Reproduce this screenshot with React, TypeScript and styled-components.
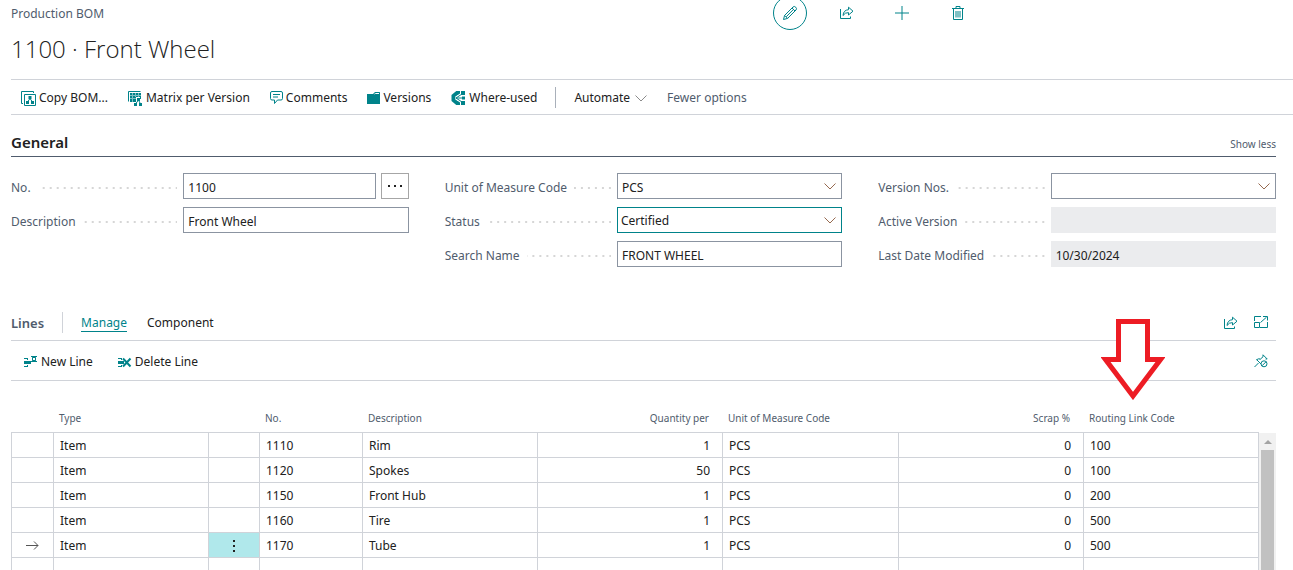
import React from "react";
import styled, { createGlobalStyle, css } from "styled-components";

const teal = "#00838a";
const ink = "#212121";
const slate = "#505c6d";
const rule = "#d0d3d9";
const fieldBorder = "#8b94a1";

const GlobalStyle = createGlobalStyle`
  *, *::before, *::after { box-sizing: border-box; }
  body {
    margin: 0;
    background: #fff;
    color: ${ink};
    font-family: "Segoe UI", "Noto Sans", "Open Sans", sans-serif;
    font-size: 12px;
    line-height: 16px;
  }
  button, input, select { font: inherit; color: inherit; }
  button { padding: 0; border: 0; background: none; cursor: pointer; }
`;

const Page = styled.div`
  display: flex;
  flex-direction: column;
  height: 100vh;
  padding-left: 11px;
  overflow: hidden;
`;

const Header = styled.header`
  display: grid;
  grid-template-columns: 12fr auto 5fr;
  height: 30px;
`;

const Caption = styled.span`
  padding-top: 6px;
  color: ${slate};
`;

const HeaderActions = styled.div`
  display: flex;
  gap: 22px;
  margin-top: -4px;
`;

const RoundButton = styled.button<{ $ring?: boolean }>`
  display: grid;
  place-items: center;
  width: 34px;
  height: 34px;
  border-radius: 50%;
  color: ${teal};
  ${(p) => p.$ring && css`border: 1px solid ${teal};`}
`;

const Title = styled.h1`
  margin: 0 0 11px;
  font-family: "Segoe UI", "Open Sans", sans-serif;
  font-size: 24px;
  font-weight: 300;
  line-height: 38px;
`;

const Toolbar = styled.div`
  display: flex;
  align-items: center;
  height: 36px;
  padding-left: 10px;
  border-top: 1px solid ${rule};
  border-bottom: 1px solid ${rule};
  flex: none;
`;

const Actions = styled.div<{ $gap: number }>`
  display: flex;
  gap: ${(p) => p.$gap}px;
`;

const Action = styled.button<{ $muted?: boolean }>`
  display: flex;
  align-items: center;
  gap: 3px;
  padding-top: 2px;
  white-space: nowrap;
  color: ${(p) => (p.$muted ? slate : ink)};
  svg { flex: none; color: ${teal}; }
`;

const MenuArrow = styled.svg`
  && { margin-left: 2px; color: #8b8b8b; }
`;

const Separator = styled.span<{ $space: number; $light?: boolean }>`
  width: 1px;
  height: 21px;
  margin: 0 ${(p) => p.$space}px;
  background: ${(p) => (p.$light ? rule : "#a9b0ba")};
`;

const Body = styled.main`
  display: flex;
  flex-direction: column;
  flex: 1;
  min-height: 0;
  padding-right: 17px;
`;

const SectionHead = styled.div`
  display: flex;
  align-items: flex-end;
  justify-content: space-between;
  height: 42px;
  padding-bottom: 3px;
  border-bottom: 1px solid ${slate};
  flex: none;
`;

const SectionTitle = styled.h2`
  margin: 0;
  font-size: 15px;
  font-weight: 600;
  line-height: 22px;
`;

const ShowLess = styled.button`
  font-size: 10px;
  line-height: 18px;
  color: ${slate};
`;

const Fields = styled.div`
  display: grid;
  grid-template-columns: repeat(3, 1fr);
  gap: 36px;
  align-items: start;
  margin-top: 16px;
  flex: none;
`;

const FieldColumn = styled.div`
  display: grid;
  gap: 8px;
`;

const FieldRow = styled.div`
  display: grid;
  grid-template-columns: 13fr 17fr;
  align-items: center;
  height: 26px;
`;

const FieldLabel = styled.label`
  display: flex;
  align-items: center;
  gap: 7px;
  padding: 4px 6px 0 0;
  color: ${slate};
  white-space: nowrap;
  &::after {
    content: "";
    flex: 1;
    height: 2px;
    background: linear-gradient(90deg, transparent 5px, #d6d6d6 5px) right / 7px 2px repeat-x;
  }
`;

const Control = styled.div`
  position: relative;
  display: flex;
  gap: 5px;
`;

const box = css`
  width: 100%;
  min-width: 0;
  height: 26px;
  padding: 3px 4px 0;
  border: 1px solid ${fieldBorder};
  border-radius: 0;
  background: #fff;
  outline: 0;
`;

const TextInput = styled.input`
  ${box}
  &:read-only { border-color: #ebecee; background: #ebecee; }
`;

const Select = styled.select<{ $active?: boolean }>`
  ${box}
  appearance: none;
  ${(p) => p.$active && css`
    padding: 1px 3px 0;
    border-color: ${teal};
  `}
`;

const SelectArrow = styled.svg`
  position: absolute;
  top: 10px;
  right: 6px;
  pointer-events: none;
`;

const AssistButton = styled.button`
  display: grid;
  place-items: center;
  flex: none;
  width: 28px;
  height: 26px;
  border: 1px solid #a6a6a6;
`;

const LinesHead = styled.div`
  display: flex;
  align-items: center;
  height: 36px;
  margin-top: 38px;
  border-bottom: 1px solid ${rule};
  flex: none;
`;

const LinesTitle = styled.h2`
  margin: 0;
  font-size: 13px;
  font-weight: 600;
  line-height: 16px;
  color: ${slate};
`;

const Tab = styled.button<{ $active?: boolean }>`
  padding-top: 2px;
  line-height: 16px;
  border-bottom: 1px solid ${(p) => (p.$active ? teal : "transparent")};
  color: ${(p) => (p.$active ? teal : ink)};
`;

const IconGroup = styled.div`
  display: flex;
  gap: 16px;
  margin-left: auto;
  padding-right: 8px;
`;

const IconButton = styled.button`
  display: grid;
  color: ${teal};
`;

const LinesToolbar = styled.div`
  display: flex;
  align-items: center;
  height: 40px;
  padding-left: 12px;
  border-bottom: 1px solid ${rule};
  flex: none;
`;

const GridArea = styled.div`
  display: flex;
  flex: 1;
  min-height: 0;
  margin-top: 24px;
`;

const Table = styled.table`
  flex: 1;
  align-self: flex-start;
  width: 100%;
  table-layout: fixed;
  border-collapse: separate;
  border-spacing: 0;
`;

const HeadCell = styled.th<{ $right?: boolean }>`
  position: relative;
  height: 28px;
  padding: 0 14px 2px 5px;
  border-bottom: 1px solid ${rule};
  font-size: 10px;
  font-weight: 400;
  text-align: ${(p) => (p.$right ? "right" : "left")};
  white-space: nowrap;
  color: ${slate};
`;

const Cell = styled.td<{ $right?: boolean; $mark?: boolean }>`
  height: 25px;
  padding: 2px ${(p) => (p.$mark ? 0 : 12)}px 0 ${(p) => (p.$mark ? 0 : 6)}px;
  border-right: 1px solid ${rule};
  border-bottom: 1px solid ${rule};
  text-align: ${(p) => (p.$mark ? "center" : p.$right ? "right" : "left")};
  &:first-child { border-left: 1px solid ${rule}; }
`;

const MenuCell = styled(Cell)<{ $on: boolean }>`
  background: ${(p) => (p.$on ? "#b0e8eb" : "transparent")};
  svg { display: block; margin: auto; }
`;

const RowMenu = styled.button`
  display: block;
  width: 100%;
`;

const Scrollbar = styled.div`
  display: flex;
  flex-direction: column;
  align-items: center;
  width: 17px;
  margin-top: 28px;
  background: #f1f1f1;
`;

const ScrollUp = styled.button`
  display: grid;
  place-items: center;
  width: 17px;
  height: 17px;
`;

const Thumb = styled.div`
  flex: 1;
  width: 13px;
  background: #c1c1c1;
`;

const PointerArrow = styled.svg`
  position: absolute;
  left: 17px;
  bottom: 32px;
  z-index: 1;
  pointer-events: none;
`;

const Chevron = () => (
  <path d="M0.5 0.5 L6 6 L11.5 0.5" fill="none" stroke="currentColor" />
);

const PencilIcon = () => (
  <svg width="16" height="16" viewBox="0 0 16 16" fill="none" stroke="currentColor">
    <path d="M1.5 14.5 L2.6 10.4 L11 2 Q12.4 .8 13.7 2.2 Q15.2 3.6 14 5 L5.6 13.4 Z M2.6 10.4 L5.6 13.4 M10 3 L13 6 M4.2 11.8 L11.4 4.5" />
  </svg>
);

const ShareIcon = () => (
  <svg width="15" height="14" viewBox="0 0 15 14" fill="none" stroke="currentColor">
    <path d="M1.5 3 V12.5 H11.5 V10.5" />
    <path d="M4 9.5 Q4.5 4 9.5 3.7 V1.2 L14 5.2 L9.5 9 V6.6 Q6 6.4 4 9.5 Z" />
  </svg>
);

const PlusIcon = () => (
  <svg width="14" height="14" viewBox="0 0 14 14" stroke="currentColor">
    <path d="M0 7 H14 M7 0 V14" />
  </svg>
);

const TrashIcon = () => (
  <svg width="12" height="15" viewBox="0 0 12 15" fill="none" stroke="currentColor">
    <path d="M0 2.5 H12 M4 2.5 V.5 H8 V2.5 M1.5 2.5 V13.5 H10.5 V2.5 M4 5 V11.5 M6 5 V11.5 M8 5 V11.5" />
  </svg>
);

const CopyIcon = () => (
  <svg width="15" height="15" viewBox="0 0 15 15" fill="none" stroke="currentColor">
    <path d="M2 12.5 H.5 V.5 H12.5 V2" />
    <path d="M3.5 3.5 H14.5 V14.5 H3.5 Z" />
    <path d="M7.5 5 H10.5 V8 H7.5 Z M5 10 H8 V13 H5 Z M10 10 H13 V13 H10 Z" fill="currentColor" stroke="none" />
    <path d="M9 7.5 L6.5 11 M9 7.5 L11.5 11" />
  </svg>
);

const MatrixIcon = () => (
  <svg width="15" height="15" viewBox="0 0 15 15" fill="none" stroke="currentColor">
    <path d="M.5 10.5 V.5 H12.5" />
    <path d="M2 2 H13 V8 H12 V6 H8 V11 H2 Z" fill="currentColor" stroke="none" />
    <path d="M2 4.5 H13 M2 7.5 H8 M4.5 2 V11 M7.5 2 V6 M10.5 2 V6" stroke="#7fbfc3" />
    <path d="M9 7 H12 V10 H9 Z M6 12 H9 V15 H6 Z M11 12 H14 V15 H11 Z" fill="currentColor" stroke="none" />
    <path d="M10.5 9 L7.5 13 M10.5 9 L12.5 13" />
  </svg>
);

const CommentIcon = () => (
  <svg width="13" height="14" viewBox="0 0 13 14" fill="none" stroke="currentColor">
    <path d="M2 .5 H11 Q12.5 .5 12.5 2 V7.5 Q12.5 9 11 9 H7.5 L4.5 12.5 V9 H2 Q.5 9 .5 7.5 V2 Q.5 .5 2 .5 Z M3 3.5 H10 M3 6 H8" />
  </svg>
);

const FolderIcon = () => (
  <svg width="13" height="12" viewBox="0 0 13 12">
    <path d="M0 2 H6 L8 0 H12.5 L13 .5 V12 H0 Z" fill="currentColor" />
    <path d="M7.5 2 L8.5 1.5 H12" stroke="#fff" fill="none" />
  </svg>
);

const WhereUsedIcon = () => (
  <svg width="15" height="14" viewBox="0 0 15 14" fill="none" stroke="currentColor">
    <path d="M9 2 H6 L2.5 5 V9 L6 12 H9" strokeWidth="4" />
    <path d="M5 7 L11 3 M5 7 L11 11 M5 7 H12" stroke="#fff" strokeWidth="3" />
    <path d="M5 7 L11 3 M5 7 L11 11 M5 7 H12" />
    <path d="M10 0 H14 V4 H10 Z M10 10 H14 V14 H10 Z M11 5.5 H14 V8.5 H11 Z" fill="currentColor" stroke="none" />
  </svg>
);

const NewLineIcon = () => (
  <svg width="15" height="14" viewBox="0 0 15 14" fill="none" stroke="currentColor">
    <path d="M1 3.5 H4.5 M1 11.5 H4.5 M4.5 3 V5 M4.5 10 V12" />
    <path d="M1 6 H8 V9 H1 Z" fill="currentColor" stroke="none" />
    <path d="M9.5 2.5 H12.5 V5.5 H9.5 Z M8 1 L9.5 2.5 M14 1 L12.5 2.5 M8 7 L9.5 5.5 M14 7 L12.5 5.5 M9 1.5 H13 M9 6.5 H13" />
  </svg>
);

const DeleteLineIcon = () => (
  <svg width="15" height="14" viewBox="0 0 15 14" fill="none" stroke="currentColor">
    <path d="M1 3.5 H4.5 M1 11.5 H4.5 M4.5 3 V5 M4.5 10 V12" />
    <path d="M1 6 H7 V9 H1 Z" fill="currentColor" stroke="none" />
    <path d="M6 3.5 L13.5 11.5 M13.5 3.5 L6 11.5" strokeWidth="2" />
  </svg>
);

const ExpandIcon = () => (
  <svg width="14" height="12" viewBox="0 0 14 12" fill="none" stroke="currentColor">
    <path d="M.5 5 V.5 H7 M13.5 6 V11.5 H6 M.5 6.5 H5.5 V11.5 H.5 Z M6.5 6.5 L12.5 1.2 M9 .5 H13.5 V4.5" />
  </svg>
);

const UnpinIcon = () => (
  <svg width="14" height="14" viewBox="0 0 14 14" fill="none" stroke="currentColor">
    <path d="M.5 13 L4.5 9 M2.5 5.5 L7 10 M2.5 5.8 Q4.5 4.2 6.5 5 L9 2.8 V.8 L13.2 5 H11.5 M6.5 5 L6 5.5" />
    <circle cx="10" cy="9.8" r="3" />
    <path d="M8 11.8 L12 7.8" />
  </svg>
);

type FieldProps = {
  id: string;
  label: string;
  value: string;
  kind?: "text" | "select" | "assist" | "readonly";
  active?: boolean;
};

const Field = ({ id, label, value, kind = "text", active }: FieldProps) => (
  <FieldRow>
    <FieldLabel htmlFor={id}>{label}</FieldLabel>
    <Control>
      {kind === "select" ? (
        <>
          <Select id={id} defaultValue={value} $active={active}>
            <option>{value}</option>
          </Select>
          <SelectArrow width="12" height="7" viewBox="0 0 12 7" color="#96694f">
            <Chevron />
          </SelectArrow>
        </>
      ) : (
        <TextInput id={id} defaultValue={value} readOnly={kind === "readonly"} />
      )}
      {kind === "assist" && (
        <AssistButton aria-label="Assist edit">
          <svg width="14" height="2" viewBox="0 0 14 2" fill={ink}>
            <path d="M0 0 H2 V2 H0 Z M6 0 H8 V2 H6 Z M12 0 H14 V2 H12 Z" />
          </svg>
        </AssistButton>
      )}
    </Control>
  </FieldRow>
);

const columnWidths = [43, 155, 51, 103, 175, 185, 176, 185, 175];

const lines = [
  { no: "1110", description: "Rim", quantity: 1, routing: "100" },
  { no: "1120", description: "Spokes", quantity: 50, routing: "100" },
  { no: "1150", description: "Front Hub", quantity: 1, routing: "200" },
  { no: "1160", description: "Tire", quantity: 1, routing: "500" },
  { no: "1170", description: "Tube", quantity: 1, routing: "500", current: true },
];

export default function App() {
  return (
    <Page>
      <GlobalStyle />
      <Header>
        <Caption>Production BOM</Caption>
        <HeaderActions>
          <RoundButton $ring aria-label="Edit"><PencilIcon /></RoundButton>
          <RoundButton aria-label="Share"><ShareIcon /></RoundButton>
          <RoundButton aria-label="New"><PlusIcon /></RoundButton>
          <RoundButton aria-label="Delete"><TrashIcon /></RoundButton>
        </HeaderActions>
      </Header>
      <Title>1100 · Front Wheel</Title>

      <Toolbar>
        <Actions $gap={20}>
          <Action><CopyIcon />Copy BOM...</Action>
          <Action><MatrixIcon />Matrix per Version</Action>
          <Action><CommentIcon />Comments</Action>
          <Action><FolderIcon />Versions</Action>
          <Action><WhereUsedIcon />Where-used</Action>
        </Actions>
        <Separator $space={18} />
        <Actions $gap={20}>
          <Action>
            Automate
            <MenuArrow width="12" height="7" viewBox="0 0 12 7">
              <Chevron />
            </MenuArrow>
          </Action>
          <Action $muted>Fewer options</Action>
        </Actions>
      </Toolbar>

      <Body>
        <SectionHead>
          <SectionTitle>General</SectionTitle>
          <ShowLess>Show less</ShowLess>
        </SectionHead>
        <Fields>
          <FieldColumn>
            <Field id="no" label="No." value="1100" kind="assist" />
            <Field id="description" label="Description" value="Front Wheel" />
          </FieldColumn>
          <FieldColumn>
            <Field id="uom" label="Unit of Measure Code" value="PCS" kind="select" />
            <Field id="status" label="Status" value="Certified" kind="select" active />
            <Field id="search" label="Search Name" value="FRONT WHEEL" />
          </FieldColumn>
          <FieldColumn>
            <Field id="version-nos" label="Version Nos." value="" kind="select" />
            <Field id="active-version" label="Active Version" value="" kind="readonly" />
            <Field id="modified" label="Last Date Modified" value="10/30/2024" kind="readonly" />
          </FieldColumn>
        </Fields>

        <LinesHead>
          <LinesTitle>Lines</LinesTitle>
          <Separator $space={18} $light />
          <Actions $gap={20}>
            <Tab $active>Manage</Tab>
            <Tab>Component</Tab>
          </Actions>
          <IconGroup>
            <IconButton aria-label="Share lines"><ShareIcon /></IconButton>
            <IconButton aria-label="Expand lines"><ExpandIcon /></IconButton>
          </IconGroup>
        </LinesHead>
        <LinesToolbar>
          <Actions $gap={24}>
            <Action><NewLineIcon />New Line</Action>
            <Action><DeleteLineIcon />Delete Line</Action>
          </Actions>
          <IconGroup>
            <IconButton aria-label="Unpin"><UnpinIcon /></IconButton>
          </IconGroup>
        </LinesToolbar>

        <GridArea>
          <Table>
            <colgroup>
              {columnWidths.map((width, i) => <col key={i} width={width} />)}
            </colgroup>
            <thead>
              <tr>
                <HeadCell />
                <HeadCell>Type</HeadCell>
                <HeadCell />
                <HeadCell>No.</HeadCell>
                <HeadCell>Description</HeadCell>
                <HeadCell $right>Quantity per</HeadCell>
                <HeadCell>Unit of Measure Code</HeadCell>
                <HeadCell $right>Scrap %</HeadCell>
                <HeadCell>
                  Routing Link Code
                  <PointerArrow width="64" height="82" viewBox="0 0 64 82">
                    <path
                      d="M17.5 3.5 H46.5 V41.5 H59.5 L32 78 L4.5 41.5 H17.5 Z"
                      fill="#fff"
                      stroke="#ed1c24"
                      strokeWidth="5"
                    />
                  </PointerArrow>
                </HeadCell>
              </tr>
            </thead>
            <tbody>
              {lines.map((line) => (
                <tr key={line.no}>
                  <Cell $mark>
                    {line.current && (
                      <svg width="13" height="9" viewBox="0 0 13 9" fill="none" stroke="#555" aria-label="Current line">
                        <path d="M0 4.5 H12 M8 .5 L12 4.5 L8 8.5" />
                      </svg>
                    )}
                  </Cell>
                  <Cell>Item</Cell>
                  <MenuCell $mark $on={!!line.current}>
                    {line.current && (
                      <RowMenu aria-label="Row menu">
                        <svg width="2" height="12" viewBox="0 0 2 12" fill={ink}>
                          <path d="M0 0 H2 V2 H0 Z M0 5 H2 V7 H0 Z M0 10 H2 V12 H0 Z" />
                        </svg>
                      </RowMenu>
                    )}
                  </MenuCell>
                  <Cell>{line.no}</Cell>
                  <Cell>{line.description}</Cell>
                  <Cell $right>{line.quantity}</Cell>
                  <Cell>PCS</Cell>
                  <Cell $right>0</Cell>
                  <Cell>{line.routing}</Cell>
                </tr>
              ))}
              <tr>
                {columnWidths.map((_, i) => <Cell key={i} />)}
              </tr>
            </tbody>
          </Table>
          <Scrollbar>
            <ScrollUp aria-label="Scroll up">
              <svg width="8" height="4" viewBox="0 0 8 4"><path d="M0 4 L4 0 L8 4 Z" fill="#a3a3a3" /></svg>
            </ScrollUp>
            <Thumb />
          </Scrollbar>
        </GridArea>
      </Body>
    </Page>
  );
}
